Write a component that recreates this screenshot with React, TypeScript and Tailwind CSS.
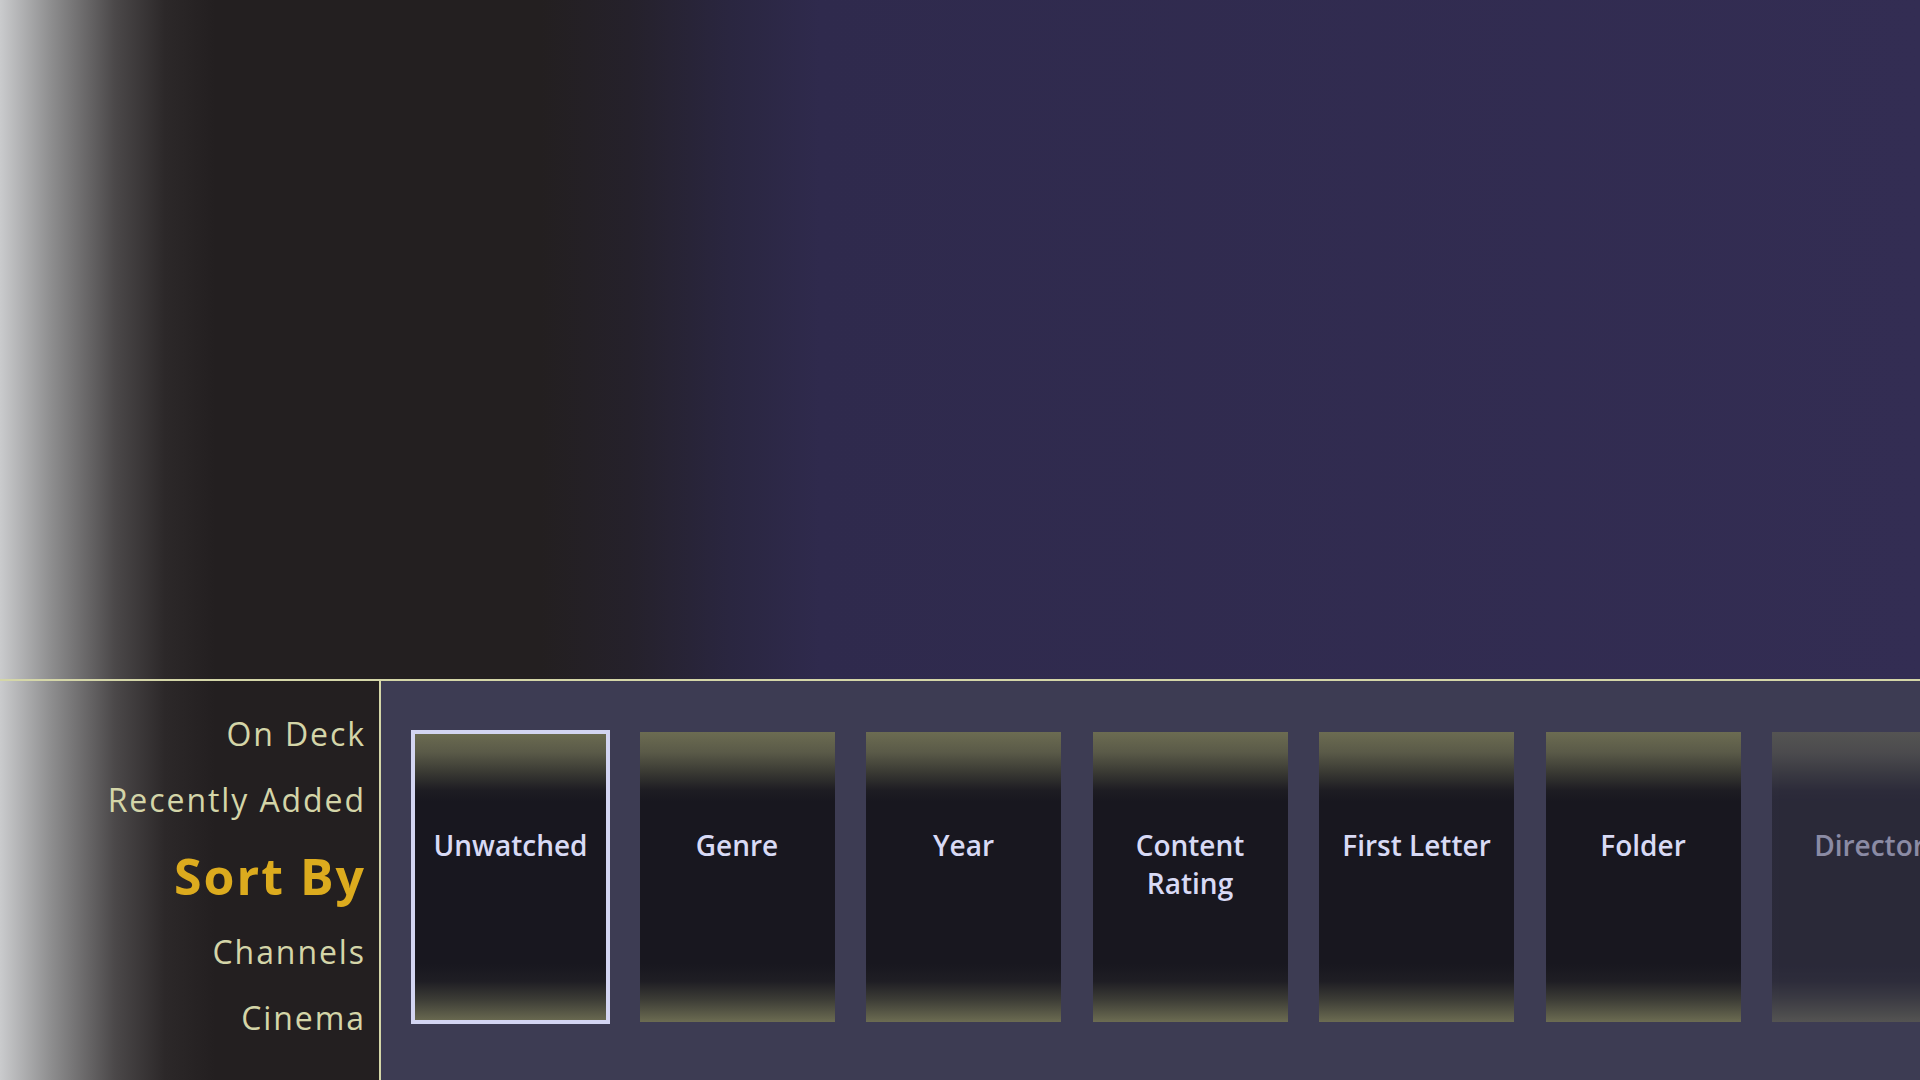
const MENU = [
  { label: "On Deck", active: false },
  { label: "Recently Added", active: false },
  { label: "Sort By", active: true },
  { label: "Channels", active: false },
  { label: "Cinema", active: false },
];

const OPTIONS = [
  "Unwatched",
  "Genre",
  "Year",
  "Content Rating",
  "First Letter",
  "Folder",
  "Director",
];

const SIDE_FADE =
  "bg-[linear-gradient(to_right,#cacbcd_0px,#8f8f90_50px,#4b4849_115px,#2c2829_165px,#231f20_215px)]";

function SortCard({ label, index }: { label: string; index: number }) {
  const selected = index === 0;
  const faded = index === 6;

  return (
    <div
      className={`relative h-[290px] w-[195px] shrink-0 bg-[linear-gradient(to_bottom,#6c6c52_0%,#5a5a48_7%,#393933_14%,#1e1d23_20%,#18171f_24%,#18171f_80%,#1f1e24_86%,#3b3b35_92%,#6c6c52_100%)] ${
        faded ? "opacity-50" : ""
      }`}
    >
      {selected && (
        <div className="absolute -inset-[2px] border-4 border-[#d3d5f2]" />
      )}
      <p className="px-3 pt-[94px] text-center text-[28px] font-semibold leading-[38px] text-[#d8daf5]">
        {label === "Content Rating" ? (
          <>
            Content
            <br />
            Rating
          </>
        ) : (
          label
        )}
      </p>
    </div>
  );
}

export default function App() {
  return (
    <div className="flex h-[1080px] w-[1920px] flex-col overflow-hidden font-['Open_Sans',sans-serif]">
      <div className="h-[679px] shrink-0 bg-[linear-gradient(to_right,#cacbcd_0px,#8f8f90_50px,#4b4849_115px,#2c2829_165px,#231f20_215px,#231f20_540px,#25212b_630px,#2a2640_730px,#2f2a4d_820px,#332d53_100%)]" />

      <div className="flex flex-1 border-t-2 border-[#d4d6a8]">
        <nav
          className={`flex w-[381px] shrink-0 flex-col items-end border-r-2 border-[#d4d6a8] pr-[13px] pt-[20px] ${SIDE_FADE}`}
        >
          {MENU.map((item) =>
            item.active ? (
              <div
                key={item.label}
                className="flex h-[86px] items-center text-[50px] font-bold tracking-[0.04em] text-[#dcab1e]"
              >
                {item.label}
              </div>
            ) : (
              <div
                key={item.label}
                className="flex h-[66px] items-center text-[32px] tracking-[0.06em] text-[#d4d5a8]"
              >
                {item.label}
              </div>
            ),
          )}
        </nav>

        <div className="flex flex-1 gap-[31.5px] overflow-hidden bg-[#3d3c53] pl-[32px] pt-[51px]">
          {OPTIONS.map((label, i) => (
            <SortCard key={label} label={label} index={i} />
          ))}
        </div>
      </div>
    </div>
  );
}
